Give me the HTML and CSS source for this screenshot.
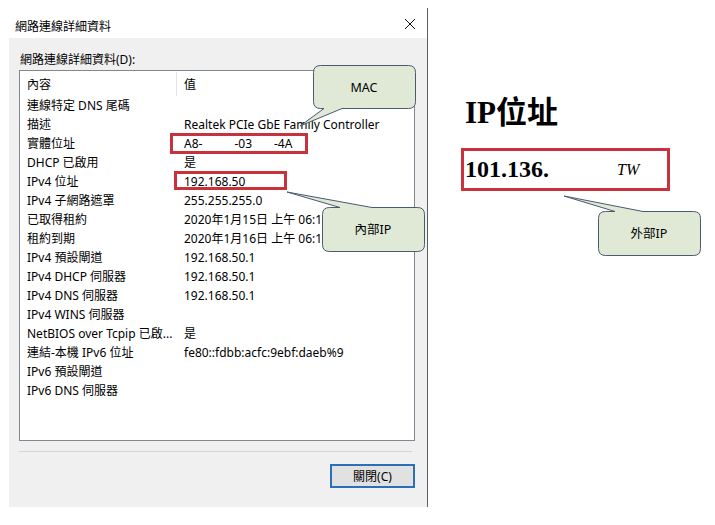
FILE: index.html
```html
<!DOCTYPE html>
<html lang="zh-TW">

<head>
    <meta charset="UTF-8">
    <title>網路連線詳細資料</title>
    <link rel="stylesheet" href="styles.css">
</head>

<body>
    <div class="page">
        <div class="dialog">
            <div class="titlebar">
                <span class="title">網路連線詳細資料</span>
                <svg class="close" width="12" height="12" viewBox="0 0 12 12">
                    <path d="M1 1 L11 11 M11 1 L1 11" stroke="#111" stroke-width="1" fill="none" />
                </svg>
            </div>
            <div class="dlg-body">
                <div class="label">網路連線詳細資料(D):</div>
                <div class="listview">
                    <div class="row head"><span class="c1">內容</span><span class="c2">值</span></div>
                    <div class="row"><span class="c1">連線特定 DNS 尾碼</span><span class="c2"></span></div>
                    <div class="row"><span class="c1">描述</span><span class="c2">Realtek PCIe GbE Family Controller</span></div>
                    <div class="row"><span class="c1">實體位址</span><span class="c2">A8-<span class="gap1">-03</span><span class="gap2">-4A</span></span></div>
                    <div class="row"><span class="c1">DHCP 已啟用</span><span class="c2">是</span></div>
                    <div class="row"><span class="c1">IPv4 位址</span><span class="c2">192.168.50</span></div>
                    <div class="row"><span class="c1">IPv4 子網路遮罩</span><span class="c2">255.255.255.0</span></div>
                    <div class="row"><span class="c1">已取得租約</span><span class="c2">2020年1月15日 上午 06:1</span></div>
                    <div class="row"><span class="c1">租約到期</span><span class="c2">2020年1月16日 上午 06:1</span></div>
                    <div class="row"><span class="c1">IPv4 預設閘道</span><span class="c2">192.168.50.1</span></div>
                    <div class="row"><span class="c1">IPv4 DHCP 伺服器</span><span class="c2">192.168.50.1</span></div>
                    <div class="row"><span class="c1">IPv4 DNS 伺服器</span><span class="c2">192.168.50.1</span></div>
                    <div class="row"><span class="c1">IPv4 WINS 伺服器</span><span class="c2"></span></div>
                    <div class="row"><span class="c1">NetBIOS over Tcpip 已啟...</span><span class="c2">是</span></div>
                    <div class="row"><span class="c1">連結-本機 IPv6 位址</span><span class="c2">fe80::fdbb:acfc:9ebf:daeb%9</span></div>
                    <div class="row"><span class="c1">IPv6 預設閘道</span><span class="c2"></span></div>
                    <div class="row"><span class="c1">IPv6 DNS 伺服器</span><span class="c2"></span></div>
                </div>
                <div class="sep"></div>
                <div class="actions"><button class="btn">關閉(C)</button></div>
            </div>
        </div>

        <div class="web">
            <h1>IP位址</h1>
            <div class="ipbox"><b>101.136.</b><i>TW</i></div>
        </div>

        <!-- 標註：紅框與說明框 -->
        <svg class="notes" width="715" height="525" viewBox="0 0 715 525">
            <rect x="171.5" y="134.5" width="135" height="18" fill="none" stroke="#c8323c" stroke-width="3" />
            <rect x="175.5" y="172.5" width="110" height="16" fill="none" stroke="#c8323c" stroke-width="3" />

            <path class="bubble" d="M320.5 65.5 H408.5 Q415.5 65.5 415.5 72.5 V101.5 Q415.5 108.5 408.5 108.5 H342 L300 126 L324 108.5 H320.5 Q313.5 108.5 313.5 101.5 V72.5 Q313.5 65.5 320.5 65.5 Z" />
            <text x="364" y="92" class="btext">MAC</text>

            <path class="bubble" d="M329.5 207.5 H340 L287 192 L372 207.5 H417.5 Q424.5 207.5 424.5 214.5 V244.5 Q424.5 251.5 417.5 251.5 H329.5 Q322.5 251.5 322.5 244.5 V214.5 Q322.5 207.5 329.5 207.5 Z" />
            <text x="373" y="234" class="btext">內部IP</text>

            <path class="bubble" d="M605.5 211.5 H615 L564 196 L643 211.5 H693.5 Q700.5 211.5 700.5 218.5 V248.5 Q700.5 255.5 693.5 255.5 H605.5 Q598.5 255.5 598.5 248.5 V218.5 Q598.5 211.5 605.5 211.5 Z" />
            <text x="649" y="238" class="btext">外部IP</text>
        </svg>
    </div>
</body>

</html>
```

FILE: styles.css
```css
body {
    margin: 0;
    background-color: #fff;
    color: #000;
    font-family: "Noto Sans", "Noto Sans CJK TC", sans-serif;
    font-size: 12px;
}

.page {
    position: relative;
    width: 715px;
    height: 525px;
    display: flex;
    align-items: flex-start;
}

.dialog {
    margin: 8px 0 0 9px;
    width: 418px;
    height: 499px;
    border-right: 1px solid #5f5f5f;
    display: flex;
    flex-direction: column;
}

.titlebar {
    height: 30px;
    display: flex;
    align-items: center;
    justify-content: space-between;
    padding: 0 11px 0 6px;
    background-color: #fff;
}

.title {
    line-height: 16px;
    margin-top: 8px;
}

.close {
    margin-top: 2px;
}

.dlg-body {
    flex: 1;
    background-color: #f0f0f0;
    padding: 12px 12px 0 10px;
}

.label {
    line-height: 16px;
    margin: 2px 0 2px 1px;
}

.listview {
    height: 371px;
    box-sizing: border-box;
    border: 1px solid #828790;
    background-color: #fff;
    padding-top: 1px;
}

.row {
    display: flex;
    height: 19px;
    line-height: 19px;
    white-space: nowrap;
}

.row.head {
    height: 24px;
    line-height: 26px;
    margin-top: -1px;
    padding-top: 1px;
}

.c1 {
    width: 157px;
    box-sizing: border-box;
    padding-left: 7px;
    overflow: hidden;
}

.head .c1 {
    border-right: 1px solid #e5e5e5;
}

.c2 {
    padding-left: 7px;
}

.gap1 {
    margin-left: 32px;
}

.gap2 {
    margin-left: 22px;
}

.sep {
    height: 1px;
    background-color: #d5d5d5;
    margin: 10px 3px 0 0;
}

.actions {
    display: flex;
    justify-content: flex-end;
    margin-top: 12px;
}

.btn {
    width: 85px;
    height: 24px;
    border: 2px solid #2a70b8;
    background-color: #e1e1e1;
    font-family: "Noto Sans", "Noto Sans CJK TC", sans-serif;
    font-size: 12px;
    color: #000;
    padding: 0;
}

.web {
    padding: 0 0 0 33px;
}

.web h1 {
    margin: 93px 0 0 4px;
    font-family: "Liberation Serif", "Noto Sans CJK TC", serif;
    font-size: 31px;
    line-height: 40px;
    font-weight: bold;
}

.ipbox {
    margin-top: 15px;
    width: 209px;
    height: 43px;
    box-sizing: border-box;
    border: 3px solid #c8323c;
    display: flex;
    align-items: center;
    padding-left: 1px;
    font-family: "Liberation Serif", serif;
}

.ipbox b {
    font-size: 24px;
}

.ipbox i {
    font-size: 16px;
    margin-left: 68px;
}

.notes {
    position: absolute;
    left: 0;
    top: 0;
    pointer-events: none;
}

.bubble {
    fill: #dfe9d5;
    stroke: #4a5a70;
    stroke-width: 1;
}

.btext {
    font-family: "Noto Sans", "Noto Sans CJK TC", sans-serif;
    font-size: 12.5px;
    text-anchor: middle;
    fill: #000;
}
```
